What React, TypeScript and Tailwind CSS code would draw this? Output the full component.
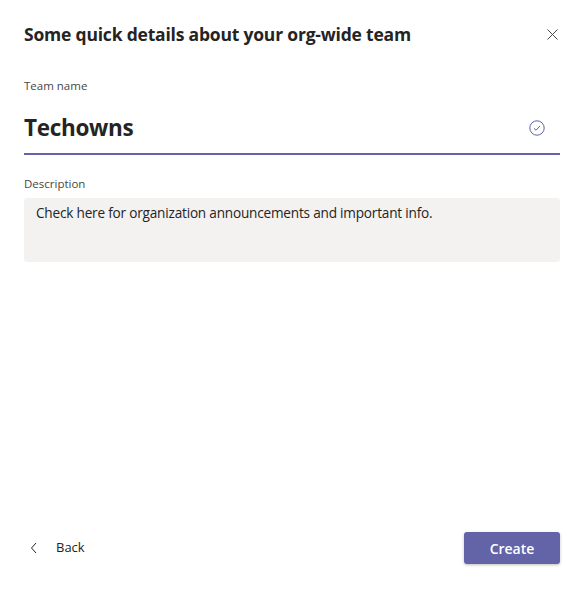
import React from 'react';

export default function App() {
  return (
    <div className="w-[584px] h-[592px] bg-white flex flex-col px-6 text-[#252423]" style={{ fontFamily: '"Open Sans", "Noto Sans", sans-serif' }}>
      {/* Header */}
      <div className="flex items-center justify-between pt-[21px]">
        <h1 className="text-[17.5px] leading-[26px] font-bold tracking-[-0.2px]">Some quick details about your org-wide team</h1>
        <button className="w-4 h-4 flex items-center justify-center text-[#484644]">
          <svg width="11" height="11" viewBox="0 0 11 11" fill="none" stroke="currentColor" strokeWidth="1">
            <path d="M0.5 0.5 L10.5 10.5 M10.5 0.5 L0.5 10.5" />
          </svg>
        </button>
      </div>

      {/* Team name */}
      <label className="mt-[31px] text-[11.5px] leading-4 text-[#484644]">Team name</label>
      <div className="mt-[18px] flex items-center justify-between border-b-2 border-[#6264a7] pb-[9px]">
        <span className="text-[22.5px] leading-8 font-bold tracking-[-0.3px]">Techowns</span>
        <svg width="16" height="16" viewBox="0 0 16 16" fill="none" stroke="#6264a7" strokeWidth="1" className="mr-[15px]">
          <circle cx="8" cy="8" r="7.2" />
          <path d="M5 8.3 L7 10.2 L11 6" />
        </svg>
      </div>

      {/* Description */}
      <label className="mt-[21px] text-[11.5px] leading-4 text-[#484644]">Description</label>
      <div className="mt-[6px] h-16 bg-[#f3f2f1] rounded-[3px] px-3 pt-[5px] text-[13.6px] leading-5 tracking-[-0.2px]">
        Check here for organization announcements and important info.
      </div>

      {/* Footer */}
      <div className="mt-auto mb-[28px] flex items-center justify-between">
        <button className="flex items-center gap-[18px] pl-[6px] text-[13px] text-[#252423]">
          <svg width="8" height="12" viewBox="0 0 8 12" fill="none" stroke="currentColor" strokeWidth="1">
            <path d="M6 1 L1.5 6 L6 11" />
          </svg>
          Back
        </button>
        <button className="w-24 h-8 rounded-[3px] bg-[#6264a7] text-white text-[14px] font-semibold shadow-[0_1px_3px_rgba(0,0,0,0.25)]">
          Create
        </button>
      </div>
    </div>
  );
}
